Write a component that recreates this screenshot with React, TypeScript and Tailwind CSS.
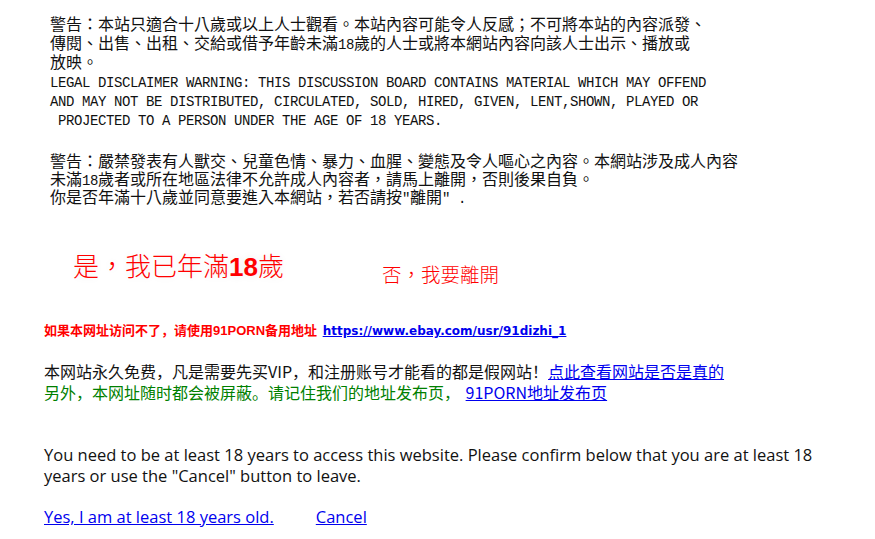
import React from "react";

const M = ({ children }: { children: React.ReactNode }) => (
  <span className="text-[14px] tracking-[-0.4px] leading-none [font-family:'Liberation_Mono',monospace]">{children}</span>
);

const L = ({ h, children, className = "" }: { h: string; children: React.ReactNode; className?: string }) => (
  <div className={`${h} overflow-visible whitespace-nowrap ${className}`}>{children}</div>
);

export default function App() {
  return (
    <div className="w-[875px] h-[539px] bg-white overflow-hidden flex flex-col">
      {/* top disclaimer */}
      <div className="pl-[50px] text-[#111] text-[16px] [font-family:'Noto_Sans_CJK_TC',sans-serif]">
        <div className="mt-[14px] leading-[19px]">
          <L h="h-[19px]">警告：本站只適合十八歲或以上人士觀看。本站內容可能令人反感；不可將本站的內容派發、</L>
          <L h="h-[19px]">傳閱、出售、出租、交給或借予年齡未滿<M>18</M>歲的人士或將本網站內容向該人士出示、播放或</L>
          <L h="h-[19px]">放映。</L>
        </div>
        <div className="mt-[3px] leading-[19px] whitespace-pre text-[14px] tracking-[-0.4px] [font-family:'Liberation_Mono',monospace]">
          <L h="h-[19px]">LEGAL DISCLAIMER WARNING: THIS DISCUSSION BOARD CONTAINS MATERIAL WHICH MAY OFFEND</L>
          <L h="h-[19px]">AND MAY NOT BE DISTRIBUTED, CIRCULATED, SOLD, HIRED, GIVEN, LENT,SHOWN, PLAYED OR</L>
          <L h="h-[19px]" className="whitespace-pre">{" PROJECTED TO A PERSON UNDER THE AGE OF 18 YEARS."}</L>
        </div>
        <div className="mt-[20px] leading-[18px]">
          <L h="h-[18px]">警告：嚴禁發表有人獸交、兒童色情、暴力、血腥、變態及令人嘔心之內容。本網站涉及成人內容</L>
          <L h="h-[18px]">未滿<M>18</M>歲者或所在地區法律不允許成人內容者，請馬上離開，否則後果自負。</L>
          <L h="h-[18px]">你是否年滿十八歲並同意要進入本網站，若否請按<M>"</M>離開<M>" .</M></L>
        </div>
      </div>

      {/* enter / leave buttons */}
      <div className="mt-[43px] h-[40px] flex items-start pl-[73px] text-[#ff0000] [font-family:'Noto_Sans_CJK_TC',sans-serif]">
        <a href="#" className="h-[34px] text-[26px] leading-[34px] font-light whitespace-nowrap [text-shadow:0_0_8px_rgba(0,0,0,0.08)]">
          是，我已年滿<span className="leading-none [font-family:'Liberation_Sans',sans-serif] font-bold">18</span>歲
        </a>
        <a href="#" className="ml-[98px] mt-[14px] h-[24px] text-[19.5px] leading-[24px] font-light whitespace-nowrap">否，我要離開</a>
      </div>

      {/* red mirror line */}
      <div className="mt-[34px] h-[18px] pl-[44px] leading-[18px] text-[13px] font-bold text-[#ff0000] whitespace-nowrap [font-family:'Liberation_Sans','Noto_Sans_CJK_SC',sans-serif]">
        如果本网址访问不了，请使用91PORN备用地址{" "}
        <a href="#" className="ml-[2px] leading-none text-[#0000ee] underline [font-family:'DejaVu_Sans',sans-serif] text-[12px]">
          https://www.ebay.com/usr/91dizhi_1
        </a>
      </div>

      {/* info lines */}
      <div className="mt-[21px] pl-[44px] leading-[21px] text-[16px] [font-family:'Noto_Sans_CJK_SC',sans-serif]">
        <L h="h-[21px]" className="text-[#111]">
          本网站永久免费，凡是需要先买VIP，和注册账号才能看的都是假网站！
          <a href="#" className="text-[#0000ee] underline">点此查看网站是否是真的</a>
        </L>
        <L h="h-[21px]" className="text-[#008000]">
          另外，本网址随时都会被屏蔽。请记住我们的地址发布页，{" "}
          <a href="#" className="ml-[2px] text-[#0000ee] underline">91PORN地址发布页</a>
        </L>
      </div>

      {/* english notice */}
      <div className="mt-[41px] h-[42px] pl-[44px] pr-[31px] leading-[21px] text-[16.5px] text-[#111] [font-family:'Open_Sans',sans-serif]">
        You need to be at least 18 years to access this website. Please confirm below that you are at least 18 years or use the "Cancel" button to leave.
      </div>
      <div className="mt-[20px] h-[21px] pl-[44px] leading-[21px] text-[16.5px] flex gap-[42px] whitespace-nowrap [font-family:'Open_Sans',sans-serif]">
        <a href="#" className="text-[#0000ee] underline">Yes, I am at least 18 years old.</a>
        <a href="#" className="text-[#0000ee] underline">Cancel</a>
      </div>
    </div>
  );
}
